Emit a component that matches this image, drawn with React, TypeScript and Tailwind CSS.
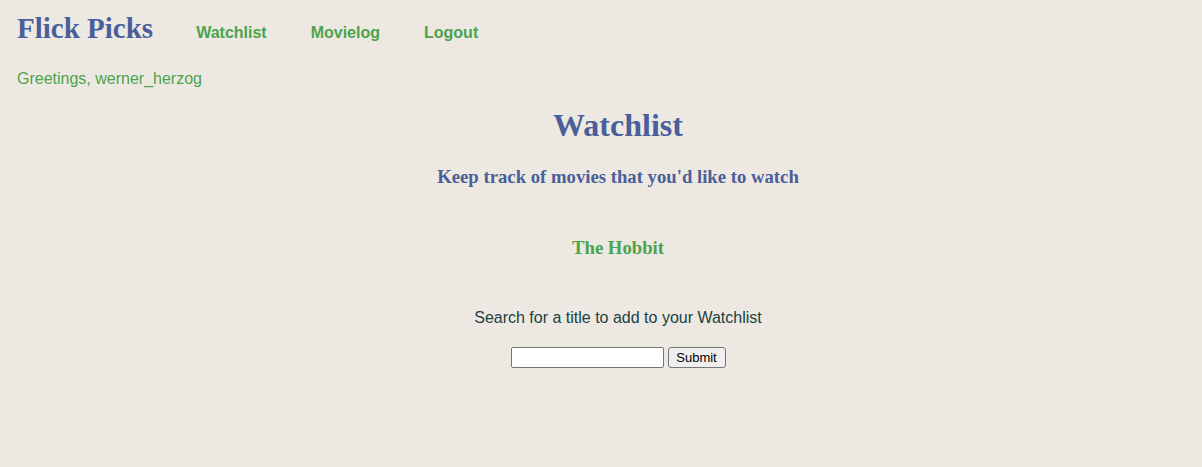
import { useState } from "react";

const serif = "font-['Liberation_Serif','Times_New_Roman',serif]";
const sans = "font-['Liberation_Sans',Arial,sans-serif]";

export default function App() {
  const [query, setQuery] = useState("");
  const movies = ["The Hobbit"];

  return (
    <div className={`min-h-[467px] w-full bg-[#ede9e2] ${sans}`}>
      {/* Top nav */}
      <nav className="flex items-baseline pl-[17px] pt-[10px]">
        <h1 className={`${serif} text-[29px] leading-[36px] font-bold text-[#4a5f9a]`}>Flick Picks</h1>
        <div className="ml-[43px] flex items-baseline gap-[44px] text-base font-bold text-[#4ca34c]">
          <a href="#">Watchlist</a>
          <a href="#">Movielog</a>
          <a href="#">Logout</a>
        </div>
      </nav>

      <p className="mt-[23px] pl-[17px] text-base leading-[20px] text-[#4ca34c]">Greetings, werner_herzog</p>

      <main className="flex flex-col items-center pl-[34px]">
        <h1 className={`${serif} mt-[18px] text-[32px] leading-[36px] font-bold text-[#4a5f9a]`}>Watchlist</h1>
        <h3 className={`${serif} mt-[23px] text-[18.72px] leading-[22px] font-bold text-[#4a5f9a]`}>
          Keep track of movies that you'd like to watch
        </h3>

        <ul className="mt-[49px] flex flex-col items-center">
          {movies.map((m) => (
            <li key={m} className={`${serif} text-[18.72px] leading-[22px] font-bold text-[#4ca34c]`}>{m}</li>
          ))}
        </ul>

        <p className="mt-[49px] text-base leading-[20px] text-[#21403f]">Search for a title to add to your Watchlist</p>

        <form className="mt-[19px] flex items-center gap-[4px]" onSubmit={(e) => e.preventDefault()}>
          <input
            value={query}
            onChange={(e) => setQuery(e.target.value)}
            className="h-[21px] w-[153px] border border-[#767676] bg-white px-[2px] text-[13px] rounded-[2px]"
          />
          <button
            type="submit"
            className="h-[21px] w-[58px] border border-[#767676] bg-[#efefef] text-[13px] leading-none text-black rounded-[3px]"
          >
            Submit
          </button>
        </form>
      </main>
    </div>
  );
}
